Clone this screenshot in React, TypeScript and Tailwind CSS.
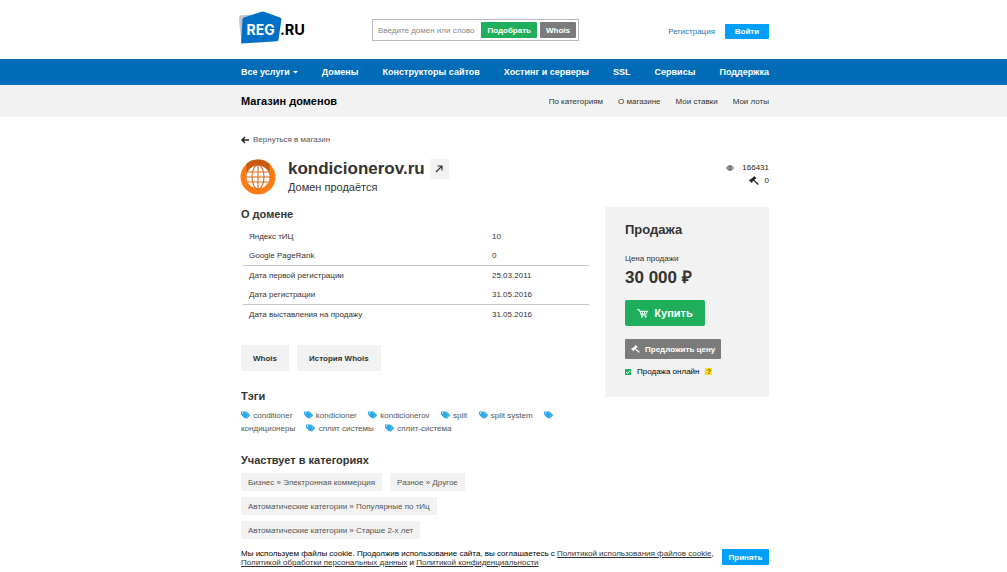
import type { ReactNode } from 'react';

const navItems = ['Домены', 'Конструкторы сайтов', 'Хостинг и серверы', 'SSL', 'Сервисы', 'Поддержка'];
const shopLinks = ['По категориям', 'О магазине', 'Мои ставки', 'Мои лоты'];
const facts = [
  ['Яндекс тИЦ', '10', false],
  ['Google PageRank', '0', true],
  ['Дата первой регистрации', '25.03.2011', false],
  ['Дата регистрации', '31.05.2016', true],
  ['Дата выставления на продажу', '31.05.2016', false],
] as const;
const tags = ['conditioner', 'kondicioner', 'kondicionerov', 'split', 'split system', 'кондиционеры', 'сплит системы', 'сплит-система'];
const categories = [
  'Бизнес » Электронная коммерция',
  'Разное » Другое',
  'Автоматические категории » Популярные по тИц',
  'Автоматические категории » Старше 2-х лет',
];

function Column({ className, children }: { className: string; children: ReactNode }) {
  return <div className={`mx-auto w-full max-w-[531px] pl-[3px] ${className}`}>{children}</div>;
}

function Logo() {
  return (
    <a href="#" aria-label="REG.RU" className="block">
      <svg width="68" height="34" viewBox="0 0 68 34" className="block">
        <path d="M0 6.500Q0 4.500 2 4.300L12 3.500L10 14L2.500 28Q.5 19 0 6.500Z" fill="#c3c5c8" />
        <path d="M3.500 8.500Q3.600 7 5 6.600L22.500 .8Q24 .3 25.500 1L41 6.500Q42.500 7 42.400 8.500L39.500 28.500Q39.300 30 38 30.200L3.500 32.500Q2 32.500 2.100 31Z" fill="#0070c6" />
        <text x="7.500" y="23.500" fill="#fff" fontFamily="Inter, sans-serif" fontWeight="700" fontSize="14">REG</text>
        <text x="41" y="23.500" fill="#000" fontFamily="Inter, sans-serif" fontWeight="700" fontSize="14.500">.RU</text>
      </svg>
    </a>
  );
}

function Gavel({ className }: { className: string }) {
  return (
    <svg viewBox="0 0 20 18" className={className} fill="currentColor" aria-hidden="true">
      <path d="M10.500 0L15 4.500L13.500 6L12.800 5.600L10.600 7.800L18.800 14.800Q19.800 16 18.800 17Q17.800 17.800 16.600 16.800L9 9.400L6.800 11.400L7.200 12.200L5.600 13.800L0 8.300L1.600 6.700L2.400 7.100L9.300 2.200L9 1.500Z" />
    </svg>
  );
}

function TagIcon() {
  return (
    <svg viewBox="0 0 20 16" className="mr-px inline-block h-2 w-[9px] align-[-1px]" fill="#2aa9e6" aria-hidden="true">
      <path d="M0 1.500Q0 0 1.500 0H11Q12 0 13 1L19.500 7.500Q20.500 8.500 19.500 9.500L14 15Q12.500 16.500 11 15L10 14L9.500 14.500Q8.500 15.500 7.500 14.500L1 8Q0 7 0 6ZM3.500 2A1.500 1.500 0 1 0 3.500 5A1.500 1.500 0 1 0 3.500 2Z" fillRule="evenodd" />
      <path d="M8.500 .5L15.500 7.500Q16.500 8.500 15.500 9.500L11 14" fill="none" stroke="#fff" strokeOpacity=".5" />
    </svg>
  );
}

function DomainIcon() {
  return (
    <svg viewBox="0 0 36 36" className="h-9 w-9 shrink-0" aria-hidden="true">
      <circle cx="18" cy="18" r="17.500" fill="#fb7b14" />
      <path d="M6.500 4.800A17.500 17.500 0 0 1 29.500 4.800V18H6.500Z" fill="#c65a11" />
      <circle cx="18" cy="18" r="11.500" fill="#fff" />
      <g fill="none" stroke="#dd6a18" strokeWidth="1.100">
        <path d="M18 6V30M6 18H30M8 13H28M8 23H28" />
        <ellipse cx="18" cy="18" rx="6" ry="12" />
      </g>
    </svg>
  );
}

export default function App() {
  return (
    <div className="min-h-screen bg-white font-['Liberation_Sans',Arial,sans-serif] text-[8px] leading-[13px] text-[#333]">
      <header>
        <Column className="flex h-[59px] items-start">
          <div className="-ml-0.5 mt-[11px]"><Logo /></div>
          <form className="ml-[65px] mt-[19px] flex h-[22px] w-[207px] items-center gap-[3px] border border-[#b9b9b9] px-0.5" onSubmit={(e) => e.preventDefault()}>
            <input aria-label="Домен или слово" placeholder="Введите домен или слово" className="h-4 min-w-0 flex-1 pl-[3px] text-[8px] outline-none placeholder:text-[#888]" />
            <button className="h-4 rounded-[1px] bg-[#1eae5c] px-[6px] text-[8px] font-bold text-white">Подобрать</button>
            <button className="h-4 rounded-[1px] bg-[#7b7b7b] px-[6px] text-[8px] font-bold text-white">Whois</button>
          </form>
          <div className="mt-6 ml-auto flex items-center gap-[10px]">
            <a href="#" className="text-[#2874b0]">Регистрация</a>
            <button className="h-[15px] w-11 rounded-[1px] bg-[#00a0fa] font-bold text-white">Войти</button>
          </div>
        </Column>
        <nav className="bg-[#006cb7] text-[9px] font-bold text-white">
          <Column className="flex h-[26px] items-center justify-between">
            <button className="flex items-center gap-[3px]">
              Все услуги
              <svg width="5" height="3" viewBox="0 0 5 3" fill="currentColor" aria-hidden="true"><path d="M0 0H5L2.500 2.500Z" /></svg>
            </button>
            {navItems.map((item) => <a key={item} href="#">{item}</a>)}
          </Column>
        </nav>
        <div className="bg-[#f2f2f2]">
          <Column className="flex h-8 items-center justify-between">
            <a href="#" className="text-[11px] font-bold text-black">Магазин доменов</a>
            <nav className="flex gap-[15px]">
              {shopLinks.map((item) => <a key={item} href="#">{item}</a>)}
            </nav>
          </Column>
        </div>
      </header>

      <main>
        <Column className="pt-4">
          <a href="#" className="flex items-center gap-1 text-[#555]">
            <svg viewBox="0 0 8 8" className="h-2 w-2" fill="none" stroke="#222" strokeWidth="1.500" aria-hidden="true"><path d="M8 4H1M4 1L1 4L4 7" /></svg>
            Вернуться в магазин
          </a>
          <div className="mt-[13px] flex items-start">
            <div className="-ml-px"><DomainIcon /></div>
            <div className="ml-3">
              <div className="flex items-center gap-[5px]">
                <h1 className="text-[17px] leading-5 font-bold">kondicionerov.ru</h1>
                <a href="#" aria-label="Открыть сайт" className="flex h-5 w-[19px] items-center justify-center bg-[#f2f2f2]">
                  <svg viewBox="0 0 8 8" className="h-2 w-2" fill="none" stroke="#333" strokeWidth="1.200" aria-hidden="true"><path d="M1 7L7 1M2.500 1H7V5.500" /></svg>
                </a>
              </div>
              <p className="text-[11px] leading-4">Домен продаётся</p>
            </div>
            <div className="mt-0.5 ml-auto flex flex-col items-end text-[#222]">
              <div className="flex items-center gap-2">
                <svg viewBox="0 0 16 12" className="h-[6px] w-2" fill="none" stroke="currentColor" strokeWidth="1.800" aria-hidden="true"><path d="M1 6Q8-3 15 6Q8 15 1 6Z" /><circle cx="8" cy="6" r="2.500" /></svg>
                166431
              </div>
              <div className="flex items-center gap-[6px]"><Gavel className="h-[9px] w-[10px]" />0</div>
            </div>
          </div>

          <div className="mt-3 flex items-start justify-between">
            <div className="w-[348px]">
              <h2 className="text-[11px] leading-[15px] font-bold">О домене</h2>
              <table className="mt-1 ml-0.5 w-[346px] border-collapse">
                <tbody>
                  {facts.map(([name, value, line]) => (
                    <tr key={name} className={line ? 'h-5 border-b border-[#c5c5c5]' : 'h-[19px]'}>
                      <th scope="row" className="w-[243px] pt-0.5 pl-[6px] text-left font-normal">{name}</th>
                      <td className="pt-0.5 pl-[6px]">{value}</td>
                    </tr>
                  ))}
                </tbody>
              </table>
              <div className="mt-[22px] flex gap-2 font-bold">
                <button className="h-[26px] bg-[#f2f2f2] px-3">Whois</button>
                <button className="h-[26px] bg-[#f2f2f2] px-3">История Whois</button>
              </div>
              <h2 className="mt-[19px] text-[11px] leading-[13px] font-bold">Тэги</h2>
              <div className="mt-[6px] w-[320px] text-[#555]">
                {tags.map((tag) => (
                  <span key={tag}>
                    <TagIcon />{' '}
                    <a href="#" className="mr-[9px]">{tag}</a>{' '}
                  </span>
                ))}
              </div>
              <h2 className="mt-[19px] text-[11px] leading-[13px] font-bold">Участвует в категориях</h2>
              <ul className="mt-[6px] flex w-[250px] flex-wrap gap-x-2 gap-y-[6px] text-[#555]">
                {categories.map((item) => (
                  <li key={item}><a href="#" className="flex h-[18px] items-center bg-[#f2f2f2] px-[7px]">{item}</a></li>
                ))}
              </ul>
            </div>

            <aside className="flex h-[190px] w-[164px] flex-col items-start bg-[#f2f2f2] px-5 pt-4">
              <h2 className="text-[13px] leading-[14px] font-bold">Продажа</h2>
              <p className="mt-[15px]">Цена продажи</p>
              <p className="mt-[3px] text-[17px] leading-5 font-bold">30 000 ₽</p>
              <button className="mt-3 flex h-[26px] w-20 items-center justify-center gap-[6px] rounded-[2px] bg-[#1eae5c] text-[11px] font-bold text-white">
                <svg viewBox="0 0 20 16" className="h-[9px] w-[11px]" fill="none" stroke="currentColor" strokeWidth="1.800" aria-hidden="true">
                  <path d="M0 1H4L8 11H17M5 4H19L16 9H7M9 4L10 9M14 4L13 9" />
                  <circle cx="9" cy="14" r="1" /><circle cx="16" cy="14" r="1" />
                </svg>
                Купить
              </button>
              <button className="mt-[13px] flex h-5 items-center gap-[5px] rounded-[1px] bg-[#7b7b7b] px-[6px] font-bold whitespace-nowrap text-white">
                <Gavel className="h-2 w-[9px]" />
                Предложить цену
              </button>
              <div className="mt-[6px] flex items-center text-black">
                <label className="flex items-center gap-[6px]">
                  <span className="grid">
                    <input type="checkbox" defaultChecked className="col-start-1 row-start-1 h-[6px] w-[6px] appearance-none bg-[#1eae5c]" />
                    <svg viewBox="0 0 6 6" className="pointer-events-none col-start-1 row-start-1 h-[6px] w-[6px]" fill="none" stroke="#fff" aria-hidden="true"><path d="M1 3L2.500 4.500L5 1.500" /></svg>
                  </span>
                  Продажа онлайн
                </label>
                <button aria-label="Подсказка" className="ml-[6px] h-[7px] w-[7px] bg-[#ffdc1e] text-[7px] leading-[7px] font-bold text-[#795d00]">?</button>
              </div>
            </aside>
          </div>
        </Column>
      </main>

      <footer>
        <Column className="flex items-start justify-between pt-[10px]">
          <p className="w-[474px] leading-[9px] text-black">
            Мы используем файлы cookie. Продолжив использование сайта, вы соглашаетесь с <a href="#" className="text-[#333] underline">Политикой использования файлов cookie</a>,{' '}
            <a href="#" className="text-[#333] underline">Политикой обработки персональных данных</a> и <a href="#" className="text-[#333] underline">Политикой конфиденциальности</a>
          </p>
          <button className="h-4 w-[47px] shrink-0 rounded-[1px] bg-[#00a0fa] font-bold text-white">Принять</button>
        </Column>
      </footer>
    </div>
  );
}
